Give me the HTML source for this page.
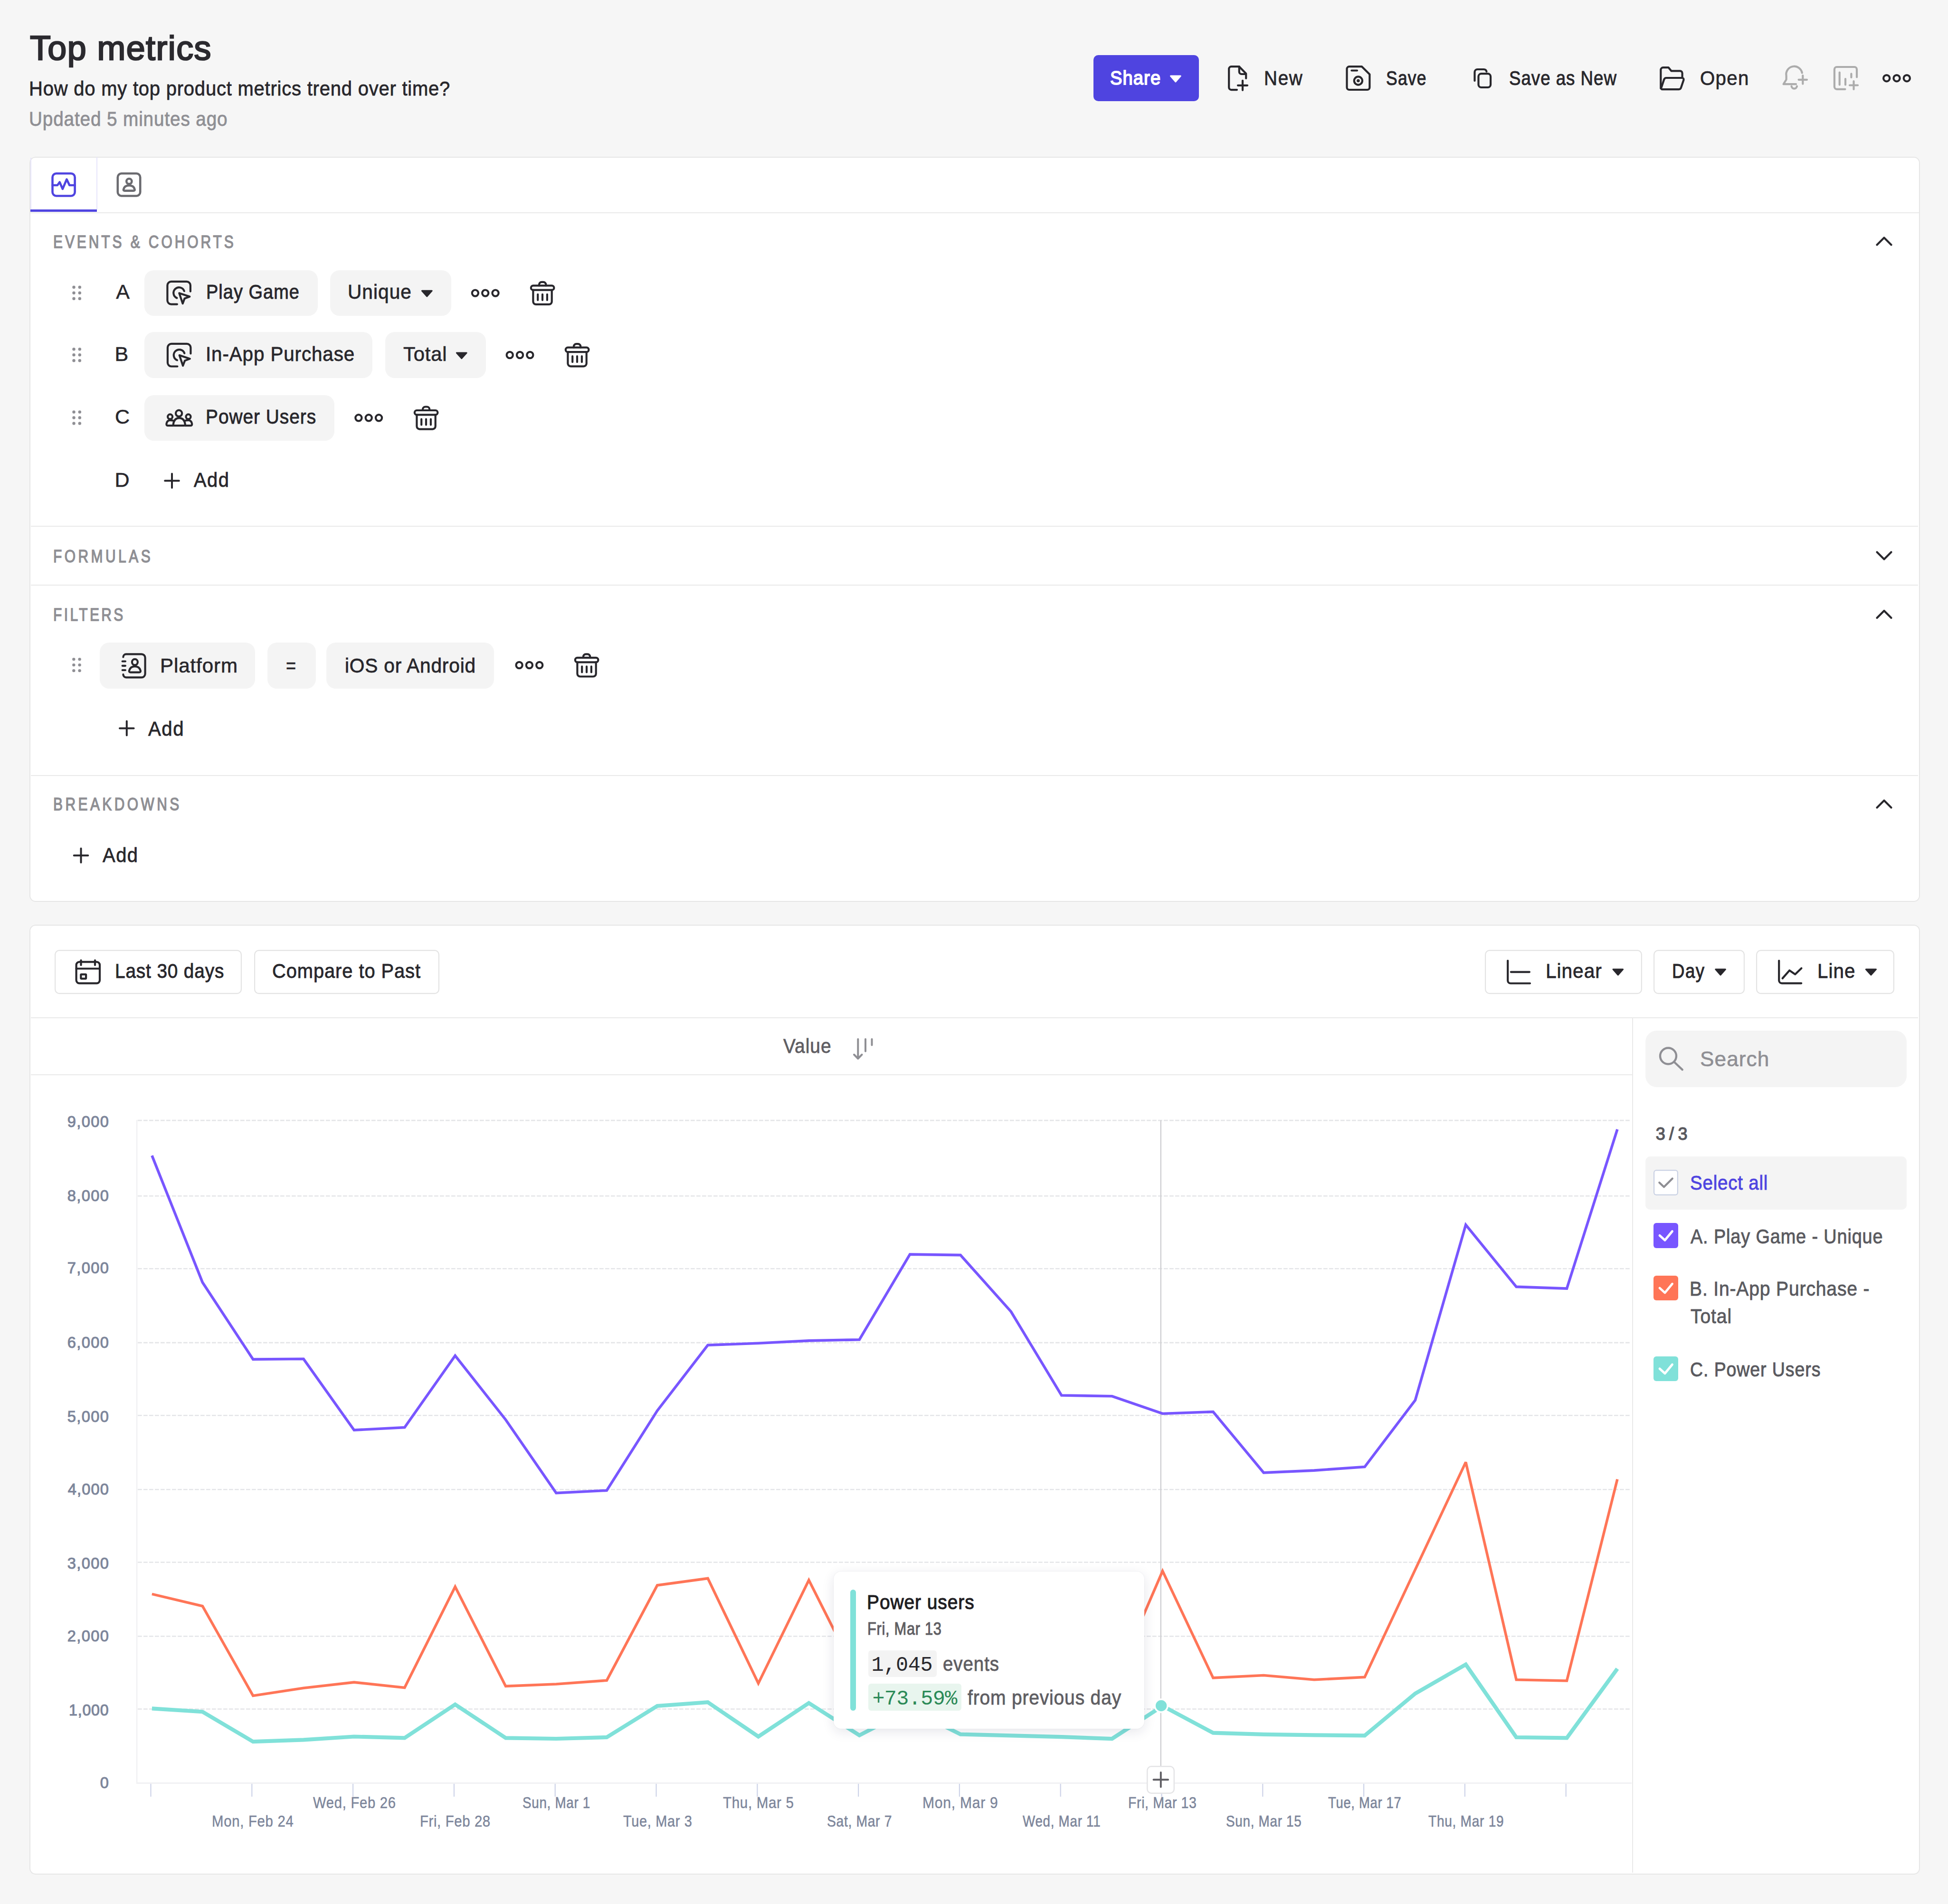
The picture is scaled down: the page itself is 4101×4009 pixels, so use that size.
<!DOCTYPE html>
<html><head><meta charset="utf-8"><title>Top metrics</title>
<style>
html,body{margin:0;padding:0;}
body{width:4101px;height:4009px;background:#f6f6f6;position:relative;overflow:hidden;font-family:"Liberation Sans",sans-serif;}
.b{position:absolute;box-sizing:border-box;}
.t{position:absolute;white-space:pre;}
svg.layer{position:absolute;left:0;top:0;width:4101px;height:4009px;}
</style></head><body>
<div class="b" style="left:61.6px;top:329.6px;width:3980.0px;height:1569.0px;background:#ffffff;box-shadow:inset 0 0 0 2px #e6e6e6;border-radius:13px;;z-index:1"></div><div class="b" style="left:61.6px;top:1946.6px;width:3980.0px;height:2000.4px;background:#ffffff;box-shadow:inset 0 0 0 2px #e6e6e6;border-radius:13px;;z-index:1"></div><div class="b" style="left:2301.6px;top:116.2px;width:222.4px;height:97.0px;background:#4f44e0;border-radius:10px;;z-index:2"></div><div class="b" style="left:63.6px;top:440.5px;width:140.3px;height:5.8px;background:#4f44e0;border-radius:0 0 0 0;;z-index:2"></div><div class="b" style="left:203.0px;top:331.0px;width:2.0px;height:110.0px;background:#e7e5fb;;z-index:2"></div><div class="b" style="left:63.6px;top:331.6px;width:2.0px;height:109.4px;background:#e7e5fb;;z-index:2"></div><div class="b" style="left:63.6px;top:446.8px;width:3976.0px;height:2.1px;background:#e9e9e9;;z-index:2"></div><div class="b" style="left:65.0px;top:1107.0px;width:3973.0px;height:2.2px;background:#e9e9e9;;z-index:2"></div><div class="b" style="left:65.0px;top:1230.5px;width:3973.0px;height:2.2px;background:#e9e9e9;;z-index:2"></div><div class="b" style="left:65.0px;top:1631.5px;width:3973.0px;height:2.2px;background:#e9e9e9;;z-index:2"></div><div class="b" style="left:304.4px;top:568.9px;width:365.0px;height:96.5px;background:#f4f4f4;border-radius:20px;;z-index:2"></div><div class="b" style="left:695.2px;top:568.9px;width:255.1px;height:96.5px;background:#f4f4f4;border-radius:20px;;z-index:2"></div><div class="b" style="left:304.4px;top:699.3px;width:480.0px;height:96.5px;background:#f4f4f4;border-radius:20px;;z-index:2"></div><div class="b" style="left:810.5px;top:699.3px;width:212.0px;height:96.5px;background:#f4f4f4;border-radius:20px;;z-index:2"></div><div class="b" style="left:304.4px;top:831.6px;width:399.8px;height:96.5px;background:#f4f4f4;border-radius:20px;;z-index:2"></div><div class="b" style="left:209.5px;top:1353.0px;width:327.0px;height:96.7px;background:#f4f4f4;border-radius:20px;;z-index:2"></div><div class="b" style="left:562.5px;top:1353.0px;width:102.1px;height:96.7px;background:#f4f4f4;border-radius:20px;;z-index:2"></div><div class="b" style="left:687.3px;top:1353.0px;width:352.4px;height:96.7px;background:#f4f4f4;border-radius:20px;;z-index:2"></div><div class="b" style="left:114.9px;top:2000.0px;width:394.0px;height:93.0px;background:#ffffff;box-shadow:inset 0 0 0 2.2px #e3e3e3;border-radius:10px;;z-index:2"></div><div class="b" style="left:535.4px;top:2000.0px;width:389.4px;height:93.0px;background:#ffffff;box-shadow:inset 0 0 0 2.2px #e3e3e3;border-radius:10px;;z-index:2"></div><div class="b" style="left:3125.7px;top:2000.0px;width:331.4px;height:93.0px;background:#ffffff;box-shadow:inset 0 0 0 2.2px #e3e3e3;border-radius:10px;;z-index:2"></div><div class="b" style="left:3481.3px;top:2000.0px;width:191.7px;height:93.0px;background:#ffffff;box-shadow:inset 0 0 0 2.2px #e3e3e3;border-radius:10px;;z-index:2"></div><div class="b" style="left:3697.1px;top:2000.0px;width:291.4px;height:93.0px;background:#ffffff;box-shadow:inset 0 0 0 2.2px #e3e3e3;border-radius:10px;;z-index:2"></div><div class="b" style="left:65.0px;top:2142.0px;width:3973.0px;height:2.2px;background:#e9e9e9;;z-index:2"></div><div class="b" style="left:3436.0px;top:2143.0px;width:2.2px;height:1800.0px;background:#e9e9e9;;z-index:2"></div><div class="b" style="left:65.0px;top:2262.0px;width:3372.0px;height:2.2px;background:#e9e9e9;;z-index:2"></div><div class="b" style="left:3463.6px;top:2170.1px;width:550.4px;height:119.3px;background:#f4f4f4;border-radius:24px;;z-index:2"></div><div class="b" style="left:3463.6px;top:2435.4px;width:550.4px;height:111.6px;background:#f4f4f4;border-radius:10px;;z-index:2"></div><div class="b" style="left:3480.8px;top:2463.0px;width:52.6px;height:53.8px;background:#ffffff;box-shadow:inset 0 0 0 2.2px #c9d1e3;border-radius:6px;;z-index:3"></div><div class="b" style="left:3480.8px;top:2575.0px;width:52.6px;height:52.8px;background:#7856ff;border-radius:6px;;z-index:3"></div><div class="b" style="left:3480.8px;top:2685.6px;width:52.6px;height:52.8px;background:#ff7557;border-radius:6px;;z-index:3"></div><div class="b" style="left:3480.8px;top:2855.5px;width:52.6px;height:52.8px;background:#80e1d9;border-radius:6px;;z-index:3"></div>
<svg class="layer" style="z-index:8" width="4101" height="4009" viewBox="0 0 4101 4009">
<path d="M2464.5 160.1 H2485.3 L2474.9 172.0 Z" fill="#ffffff" stroke="#ffffff" stroke-width="3" stroke-linejoin="round"/>
<g fill="none" stroke="#28272c" stroke-width="4.2" stroke-linecap="round" stroke-linejoin="round"><path d="M2604 189.1 H2592.2 A5 5 0 0 1 2587.2 184.1 V145.2 A5 5 0 0 1 2592.2 140.2 H2608.8 L2623.2 155 V165"/><path d="M2608.8 140.2 V151 A5 5 0 0 0 2613.8 156 H2623"/><path d="M2606 179.8 H2626 M2616 169.8 V189.8"/></g>
<g fill="none" stroke="#28272c" stroke-width="4.2" stroke-linecap="round" stroke-linejoin="round"><path d="M2840.5 140.2 H2867 L2883.4 156.6 V184 A5 5 0 0 1 2878.4 189 H2840.5 A5 5 0 0 1 2835.5 184 V145.2 A5 5 0 0 1 2840.5 140.2 Z"/><path d="M2845.5 148.5 H2857"/><circle cx="2859.4" cy="170" r="8.6"/><circle cx="2859.4" cy="170" r="1.2" fill="#28272c"/></g>
<g fill="none" stroke="#28272c" stroke-width="4.2" stroke-linecap="round" stroke-linejoin="round"><path d="M3104.5 170 V152 A6 6 0 0 1 3110.5 146 H3123.5 A6 6 0 0 1 3129.5 150.5"/><rect x="3112.5" y="155.2" width="25.6" height="28.8" rx="6"/></g>
<g fill="none" stroke="#28272c" stroke-width="4.2" stroke-linecap="round" stroke-linejoin="round"><path d="M3496.3 186 V147.2 A5 5 0 0 1 3501.3 142.2 H3512.5 L3518.5 149.3 H3537 A4.6 4.6 0 0 1 3541.6 153.9 V162"/><path d="M3496.8 186.5 L3503.2 167.5 A5 5 0 0 1 3508 164 H3541.2 A3.4 3.4 0 0 1 3544.5 168.3 L3539 184.5 A5 5 0 0 1 3534.3 188.2 H3500 A3.5 3.5 0 0 1 3496.8 186.5 Z"/></g>
<g fill="none" stroke="#acacac" stroke-width="4.2" stroke-linecap="round" stroke-linejoin="round"><path d="M3793.8 153.5 A16.5 16.5 0 0 0 3760.6 159.6 V167.5 L3754.6 177.2 H3781"/><path d="M3771.5 181.5 A5.8 5.8 0 0 0 3783 181.5"/><path d="M3786.6 167.8 H3804 M3795.3 159 V176.6"/></g>
<g fill="none" stroke="#acacac" stroke-width="4.2" stroke-linecap="round" stroke-linejoin="round"><path d="M3884.5 187.8 H3866.9 A5 5 0 0 1 3861.9 182.8 V146 A5 5 0 0 1 3866.9 141 H3904 A5 5 0 0 1 3909 146 V162.5"/><path d="M3872.7 152.5 V178.5 M3885 166.2 V178.5 M3897.4 155.4 V163"/><path d="M3894 179.5 H3911 M3902.5 171 V188"/></g>
<circle cx="3971.7" cy="164.7" r="6.6" fill="none" stroke="#28272c" stroke-width="4.2"/><circle cx="3993.0" cy="164.7" r="6.6" fill="none" stroke="#28272c" stroke-width="4.2"/><circle cx="4014.3" cy="164.7" r="6.6" fill="none" stroke="#28272c" stroke-width="4.2"/>
<g fill="none" stroke="#4f44e0" stroke-width="4.6" stroke-linecap="round" stroke-linejoin="round"><rect x="110.5" y="365.3" width="47.1" height="47.2" rx="8"/><path d="M110.5 390 H120.9 L125.6 383.5 L131.8 397.8 L140.4 377.6 L146.3 390 H157.6"/></g>
<g fill="none" stroke="#6b6b70" stroke-width="4.6" stroke-linecap="round" stroke-linejoin="round"><rect x="247.8" y="365.3" width="47.4" height="47.2" rx="8"/><circle cx="271.8" cy="381.8" r="5.6"/><path d="M260 399 Q261.5 390.5 271.8 390.5 Q282 390.5 283.6 399 Q284 401.6 281 401.6 H262.5 Q259.6 401.6 260 399 Z"/></g>
<path d="M3951.5 515.5 L3966.5 500.5 L3981.5 515.5" fill="none" stroke="#28272c" stroke-width="4.2" stroke-linecap="round" stroke-linejoin="round"/>
<path d="M3951.5 1162.5 L3966.5 1177.5 L3981.5 1162.5" fill="none" stroke="#28272c" stroke-width="4.2" stroke-linecap="round" stroke-linejoin="round"/>
<path d="M3951.5 1301.0 L3966.5 1286.0 L3981.5 1301.0" fill="none" stroke="#28272c" stroke-width="4.2" stroke-linecap="round" stroke-linejoin="round"/>
<path d="M3951.5 1700.5 L3966.5 1685.5 L3981.5 1700.5" fill="none" stroke="#28272c" stroke-width="4.2" stroke-linecap="round" stroke-linejoin="round"/>
<circle cx="155.5" cy="604.8" r="3.2" fill="#8f8f94"/>
<circle cx="155.5" cy="616.8" r="3.2" fill="#8f8f94"/>
<circle cx="155.5" cy="628.8" r="3.2" fill="#8f8f94"/>
<circle cx="167.8" cy="604.8" r="3.2" fill="#8f8f94"/>
<circle cx="167.8" cy="616.8" r="3.2" fill="#8f8f94"/>
<circle cx="167.8" cy="628.8" r="3.2" fill="#8f8f94"/>
<circle cx="155.5" cy="735.2" r="3.2" fill="#8f8f94"/>
<circle cx="155.5" cy="747.2" r="3.2" fill="#8f8f94"/>
<circle cx="155.5" cy="759.2" r="3.2" fill="#8f8f94"/>
<circle cx="167.8" cy="735.2" r="3.2" fill="#8f8f94"/>
<circle cx="167.8" cy="747.2" r="3.2" fill="#8f8f94"/>
<circle cx="167.8" cy="759.2" r="3.2" fill="#8f8f94"/>
<circle cx="155.5" cy="867.5" r="3.2" fill="#8f8f94"/>
<circle cx="155.5" cy="879.5" r="3.2" fill="#8f8f94"/>
<circle cx="155.5" cy="891.5" r="3.2" fill="#8f8f94"/>
<circle cx="167.8" cy="867.5" r="3.2" fill="#8f8f94"/>
<circle cx="167.8" cy="879.5" r="3.2" fill="#8f8f94"/>
<circle cx="167.8" cy="891.5" r="3.2" fill="#8f8f94"/>
<g transform="translate(340,579.9)" fill="none" stroke="#28272c" stroke-width="4.2" stroke-linecap="round" stroke-linejoin="round" stroke-width="4"><path d="M60.9 33.7 V21 A8 8 0 0 0 52.9 13 H20.4 A8 8 0 0 0 12.4 21 V52.7 A8 8 0 0 0 20.4 60.7 H32.9"/><path d="M47.8 33 A11.6 11.6 0 1 0 32.4 47.6"/><path d="M37.3 37.3 L59.3 44.6 L48.6 48.6 L44.6 59.3 Z"/></g>
<path d="M888.4 612.3 H909.1999999999999 L898.8 624.0 Z" fill="#28272c" stroke="#28272c" stroke-width="3" stroke-linejoin="round"/>
<circle cx="1000.4" cy="617.1" r="6.6" fill="none" stroke="#28272c" stroke-width="4.2"/><circle cx="1021.7" cy="617.1" r="6.6" fill="none" stroke="#28272c" stroke-width="4.2"/><circle cx="1043.0" cy="617.1" r="6.6" fill="none" stroke="#28272c" stroke-width="4.2"/>
<g transform="translate(1105,580.4)" fill="none" stroke="#28272c" stroke-width="4.2" stroke-linecap="round" stroke-linejoin="round" stroke-width="4"><rect x="12.8" y="20.9" width="48.6" height="9.4" rx="4.7"/><path d="M29.9 20.9 V19 A5.5 5.5 0 0 1 35.4 13.4 H38.8 A5.5 5.5 0 0 1 44.3 19 V20.9"/><path d="M17.4 30.3 V54.5 A6 6 0 0 0 23.4 60.5 H50.7 A6 6 0 0 0 56.7 54.5 V30.3"/><path d="M27.2 39.4 V51.4 M37 39.4 V51.4 M46.9 39.4 V51.4"/></g>
<g transform="translate(340.5,710.8)" fill="none" stroke="#28272c" stroke-width="4.2" stroke-linecap="round" stroke-linejoin="round" stroke-width="4"><path d="M60.9 33.7 V21 A8 8 0 0 0 52.9 13 H20.4 A8 8 0 0 0 12.4 21 V52.7 A8 8 0 0 0 20.4 60.7 H32.9"/><path d="M47.8 33 A11.6 11.6 0 1 0 32.4 47.6"/><path d="M37.3 37.3 L59.3 44.6 L48.6 48.6 L44.6 59.3 Z"/></g>
<path d="M961.4 742.9 H982.1999999999999 L971.8 754.6 Z" fill="#28272c" stroke="#28272c" stroke-width="3" stroke-linejoin="round"/>
<circle cx="1073.2" cy="747.5" r="6.6" fill="none" stroke="#28272c" stroke-width="4.2"/><circle cx="1094.5" cy="747.5" r="6.6" fill="none" stroke="#28272c" stroke-width="4.2"/><circle cx="1115.8" cy="747.5" r="6.6" fill="none" stroke="#28272c" stroke-width="4.2"/>
<g transform="translate(1178,710.8)" fill="none" stroke="#28272c" stroke-width="4.2" stroke-linecap="round" stroke-linejoin="round" stroke-width="4"><rect x="12.8" y="20.9" width="48.6" height="9.4" rx="4.7"/><path d="M29.9 20.9 V19 A5.5 5.5 0 0 1 35.4 13.4 H38.8 A5.5 5.5 0 0 1 44.3 19 V20.9"/><path d="M17.4 30.3 V54.5 A6 6 0 0 0 23.4 60.5 H50.7 A6 6 0 0 0 56.7 54.5 V30.3"/><path d="M27.2 39.4 V51.4 M37 39.4 V51.4 M46.9 39.4 V51.4"/></g>
<g transform="translate(340,845)" fill="none" stroke="#28272c" stroke-width="4.2" stroke-linecap="round" stroke-linejoin="round" stroke-width="4"><circle cx="36.6" cy="25.3" r="6.6"/><circle cx="18.1" cy="32.4" r="5"/><circle cx="56.5" cy="32.4" r="5"/><path d="M24.8 48.5 Q26.5 35.2 37.3 35.2 Q48 35.2 49.8 48.5 Q50.2 51.2 47 51.2 H27.5 Q24.5 51.2 24.8 48.5 Z"/><path d="M24 40.6 Q21.5 39.9 18.3 39.9 Q11.5 39.9 10.4 47.6 Q10.2 51.2 13.5 51.2 H25"/><path d="M50.6 40.6 Q53.1 39.9 56.3 39.9 Q63.1 39.9 64.2 47.6 Q64.4 51.2 61.1 51.2 H49.6"/></g>
<circle cx="754.9" cy="879.8" r="6.6" fill="none" stroke="#28272c" stroke-width="4.2"/><circle cx="776.2" cy="879.8" r="6.6" fill="none" stroke="#28272c" stroke-width="4.2"/><circle cx="797.5" cy="879.8" r="6.6" fill="none" stroke="#28272c" stroke-width="4.2"/>
<g transform="translate(860,843.1)" fill="none" stroke="#28272c" stroke-width="4.2" stroke-linecap="round" stroke-linejoin="round" stroke-width="4"><rect x="12.8" y="20.9" width="48.6" height="9.4" rx="4.7"/><path d="M29.9 20.9 V19 A5.5 5.5 0 0 1 35.4 13.4 H38.8 A5.5 5.5 0 0 1 44.3 19 V20.9"/><path d="M17.4 30.3 V54.5 A6 6 0 0 0 23.4 60.5 H50.7 A6 6 0 0 0 56.7 54.5 V30.3"/><path d="M27.2 39.4 V51.4 M37 39.4 V51.4 M46.9 39.4 V51.4"/></g>
<path d="M347.2 1012.2 H376.8 M362 997.4000000000001 V1027.0" fill="none" stroke="#28272c" stroke-width="4.0" stroke-linecap="round"/>
<circle cx="155.3" cy="1388.1" r="3.2" fill="#8f8f94"/>
<circle cx="155.3" cy="1400.1" r="3.2" fill="#8f8f94"/>
<circle cx="155.3" cy="1412.1" r="3.2" fill="#8f8f94"/>
<circle cx="167.6" cy="1388.1" r="3.2" fill="#8f8f94"/>
<circle cx="167.6" cy="1400.1" r="3.2" fill="#8f8f94"/>
<circle cx="167.6" cy="1412.1" r="3.2" fill="#8f8f94"/>
<g transform="translate(245,1370)" fill="none" stroke="#28272c" stroke-width="4.2" stroke-linecap="round" stroke-linejoin="round" stroke-width="4"><path d="M14.4 13.5 A6.2 6.2 0 0 1 20.6 7.3 H53 A7.6 7.6 0 0 1 60.6 14.9 V48.8 A7.6 7.6 0 0 1 53 56.4 H20.6 A6.2 6.2 0 0 1 14.4 50.2"/><path d="M12.7 22.5 H18.9 M12.7 31.8 H18.9 M12.7 41 H18.9"/><ellipse cx="38.9" cy="24.1" rx="6" ry="6.3"/><path d="M27 42 Q29.5 33.2 38.9 33.2 Q48.3 33.2 50.8 42 Q51.6 45.7 47.8 45.7 H30 Q26.2 45.7 27 42 Z"/></g>
<circle cx="1093.1" cy="1400.5" r="6.6" fill="none" stroke="#28272c" stroke-width="4.2"/><circle cx="1114.4" cy="1400.5" r="6.6" fill="none" stroke="#28272c" stroke-width="4.2"/><circle cx="1135.7" cy="1400.5" r="6.6" fill="none" stroke="#28272c" stroke-width="4.2"/>
<g transform="translate(1198,1364)" fill="none" stroke="#28272c" stroke-width="4.2" stroke-linecap="round" stroke-linejoin="round" stroke-width="4"><rect x="12.8" y="20.9" width="48.6" height="9.4" rx="4.7"/><path d="M29.9 20.9 V19 A5.5 5.5 0 0 1 35.4 13.4 H38.8 A5.5 5.5 0 0 1 44.3 19 V20.9"/><path d="M17.4 30.3 V54.5 A6 6 0 0 0 23.4 60.5 H50.7 A6 6 0 0 0 56.7 54.5 V30.3"/><path d="M27.2 39.4 V51.4 M37 39.4 V51.4 M46.9 39.4 V51.4"/></g>
<path d="M252.0 1533.4 H281.6 M266.8 1518.6000000000001 V1548.2" fill="none" stroke="#28272c" stroke-width="4.0" stroke-linecap="round"/>
<path d="M155.7 1801.3 H185.3 M170.5 1786.5 V1816.1" fill="none" stroke="#28272c" stroke-width="4.0" stroke-linecap="round"/>
<g fill="none" stroke="#28272c" stroke-width="4.2" stroke-linecap="round" stroke-linejoin="round" stroke-width="4.2"><rect x="160.6" y="2025.4" width="49.4" height="44.9" rx="6.5"/><path d="M160.6 2039.5 H210 M170.5 2022 V2032 M200 2022 V2032"/><rect x="170.3" y="2051.6" width="10.8" height="9" rx="1"/></g>
<g fill="none" stroke="#28272c" stroke-width="4.2" stroke-linecap="round" stroke-linejoin="round" stroke-width="4.2"><path d="M3174.2 2022.8 V2064.5 A6 6 0 0 0 3180.2 2070.5 H3221 M3180.9 2046.6 H3219.9"/></g>
<path d="M3396 2041.0 H3416.6 L3406.3 2052.7 Z" fill="#28272c" stroke="#28272c" stroke-width="3" stroke-linejoin="round"/>
<path d="M3611.8 2041.0 H3632.4 L3622.1000000000004 2052.7 Z" fill="#28272c" stroke="#28272c" stroke-width="3" stroke-linejoin="round"/>
<g fill="none" stroke="#28272c" stroke-width="4.2" stroke-linecap="round" stroke-linejoin="round" stroke-width="4.2"><path d="M3745.2 2022.8 V2064.3 A6 6 0 0 0 3751.2 2070.3 H3792.2"/><path d="M3752.6 2060 L3767.2 2043.3 L3779.2 2051.4 L3792.4 2038.8"/></g>
<path d="M3928.3 2041.0 H3949.5 L3938.9 2052.7 Z" fill="#28272c" stroke="#28272c" stroke-width="3" stroke-linejoin="round"/>
<g fill="none" stroke="#8f8f94" stroke-width="4" stroke-linecap="round" stroke-linejoin="round"><path d="M1806.3 2188 V2228.5 M1798 2220.5 L1806.3 2229 L1814.5 2220.5 M1822 2188 V2213.5 M1835.5 2188 V2200.5"/></g>
<g fill="none" stroke="#8f8f94" stroke-width="4.4" stroke-linecap="round"><circle cx="3512" cy="2223.5" r="17"/><path d="M3524.5 2236 L3541.8 2252.3"/></g>
<path d="M3493.3 2490 L3503 2499.3 L3520.8 2481.5" fill="none" stroke="#8e8e93" stroke-width="4.2" stroke-linecap="round" stroke-linejoin="round"/>
<path d="M3494 2601.4 L3505 2611.4 L3520.5 2592.6" fill="none" stroke="#ffffff" stroke-width="4.8" stroke-linecap="round" stroke-linejoin="round"/>
<path d="M3494 2712.0 L3505 2722.0 L3520.5 2703.2" fill="none" stroke="#ffffff" stroke-width="4.8" stroke-linecap="round" stroke-linejoin="round"/>
<path d="M3494 2881.9 L3505 2891.9 L3520.5 2873.1" fill="none" stroke="#ffffff" stroke-width="4.8" stroke-linecap="round" stroke-linejoin="round"/>
<line x1="290" y1="3598.5" x2="3433" y2="3598.5" stroke="#e4e5e8" stroke-width="2.6" stroke-dasharray="8.7 3.3"/>
<line x1="290" y1="3445.2" x2="3433" y2="3445.2" stroke="#e4e5e8" stroke-width="2.6" stroke-dasharray="8.7 3.3"/>
<line x1="290" y1="3289.5" x2="3433" y2="3289.5" stroke="#e4e5e8" stroke-width="2.6" stroke-dasharray="8.7 3.3"/>
<line x1="290" y1="3136.2" x2="3433" y2="3136.2" stroke="#e4e5e8" stroke-width="2.6" stroke-dasharray="8.7 3.3"/>
<line x1="290" y1="2980.3" x2="3433" y2="2980.3" stroke="#e4e5e8" stroke-width="2.6" stroke-dasharray="8.7 3.3"/>
<line x1="290" y1="2827.1" x2="3433" y2="2827.1" stroke="#e4e5e8" stroke-width="2.6" stroke-dasharray="8.7 3.3"/>
<line x1="290" y1="2671.2" x2="3433" y2="2671.2" stroke="#e4e5e8" stroke-width="2.6" stroke-dasharray="8.7 3.3"/>
<line x1="290" y1="2518.2" x2="3433" y2="2518.2" stroke="#e4e5e8" stroke-width="2.6" stroke-dasharray="8.7 3.3"/>
<line x1="290" y1="2359.1" x2="3433" y2="2359.1" stroke="#e4e5e8" stroke-width="2.6" stroke-dasharray="8.7 3.3"/>
<line x1="288.2" y1="2358" x2="288.2" y2="3753.5" stroke="#efeff1" stroke-width="2.2"/>
<line x1="287" y1="3754.5" x2="3435" y2="3754.5" stroke="#f1f1f3" stroke-width="3"/>
<line x1="317.5" y1="3756" x2="317.5" y2="3783" stroke="#cdd3e8" stroke-width="2.2"/>
<line x1="530.3" y1="3756" x2="530.3" y2="3783" stroke="#cdd3e8" stroke-width="2.2"/>
<line x1="743.1" y1="3756" x2="743.1" y2="3783" stroke="#cdd3e8" stroke-width="2.2"/>
<line x1="955.9" y1="3756" x2="955.9" y2="3783" stroke="#cdd3e8" stroke-width="2.2"/>
<line x1="1168.7" y1="3756" x2="1168.7" y2="3783" stroke="#cdd3e8" stroke-width="2.2"/>
<line x1="1381.5" y1="3756" x2="1381.5" y2="3783" stroke="#cdd3e8" stroke-width="2.2"/>
<line x1="1594.3" y1="3756" x2="1594.3" y2="3783" stroke="#cdd3e8" stroke-width="2.2"/>
<line x1="1807.1" y1="3756" x2="1807.1" y2="3783" stroke="#cdd3e8" stroke-width="2.2"/>
<line x1="2019.9" y1="3756" x2="2019.9" y2="3783" stroke="#cdd3e8" stroke-width="2.2"/>
<line x1="2232.7" y1="3756" x2="2232.7" y2="3783" stroke="#cdd3e8" stroke-width="2.2"/>
<line x1="2445.5" y1="3756" x2="2445.5" y2="3783" stroke="#cdd3e8" stroke-width="2.2"/>
<line x1="2658.3" y1="3756" x2="2658.3" y2="3783" stroke="#cdd3e8" stroke-width="2.2"/>
<line x1="2871.1" y1="3756" x2="2871.1" y2="3783" stroke="#cdd3e8" stroke-width="2.2"/>
<line x1="3083.9" y1="3756" x2="3083.9" y2="3783" stroke="#cdd3e8" stroke-width="2.2"/>
<line x1="3296.7" y1="3756" x2="3296.7" y2="3783" stroke="#cdd3e8" stroke-width="2.2"/>
<line x1="2443.8" y1="2359" x2="2443.8" y2="3720" stroke="#cfcfd2" stroke-width="2.4"/>
<polyline points="319.9,2433.1 426.3,2700.1 532.7,2862.1 639.0,2861.3 745.4,3011.1 851.8,3005.6 958.2,2854.5 1064.6,2989.3 1170.9,3143.6 1277.3,3138.3 1383.7,2970.3 1490.1,2832.2 1596.5,2828.3 1702.8,2822.9 1809.2,2820.7 1915.6,2641.1 2022.0,2642.6 2128.4,2761.7 2234.7,2938.0 2341.1,2939.8 2447.5,2976.5 2553.9,2972.6 2660.3,3100.8 2766.6,3096.1 2873.0,3088.6 2979.4,2948.1 3085.8,2578.9 3192.2,2709.4 3298.5,2713.1 3404.9,2377.9" fill="none" stroke="#7856ff" stroke-width="5.6" stroke-linejoin="miter" stroke-miterlimit="3"/>
<polyline points="319.9,3356.4 426.3,3381.7 532.7,3570.4 639.0,3554.3 745.4,3542.1 851.8,3553.6 958.2,3340.9 1064.6,3550.4 1170.9,3546.0 1277.3,3538.2 1383.7,3337.9 1490.1,3323.4 1596.5,3544.4 1702.8,3327.1 1809.2,3538.1 1915.6,3521.0 2022.0,3528.8 2128.4,3544.2 2234.7,3552.0 2341.1,3554.6 2447.5,3307.9 2553.9,3532.9 2660.3,3527.5 2766.6,3536.7 2873.0,3531.4 2979.4,3304.9 3085.8,3078.6 3192.2,3536.7 3298.5,3539.0 3404.9,3114.6" fill="none" stroke="#ff7557" stroke-width="5.6" stroke-linejoin="miter" stroke-miterlimit="3"/>
<polyline points="319.9,3597.4 426.3,3604.2 532.7,3667.2 639.0,3663.3 745.4,3656.5 851.8,3659.4 958.2,3588.9 1064.6,3659.4 1170.9,3661.0 1277.3,3658.0 1383.7,3592.0 1490.1,3584.2 1596.5,3656.5 1702.8,3585.8 1809.2,3653.8 1915.6,3598.5 2022.0,3651.7 2128.4,3654.3 2234.7,3657.2 2341.1,3661.0 2447.5,3592.0 2553.9,3648.7 2660.3,3651.8 2766.6,3653.4 2873.0,3654.3 2979.4,3565.9 3085.8,3504.6 3192.2,3658.0 3298.5,3659.4 3404.9,3513.7" fill="none" stroke="#80e1d9" stroke-width="8.2" stroke-linejoin="miter" stroke-miterlimit="3"/>
<circle cx="2444.6" cy="3591.5" r="13.5" fill="#80e1d9" stroke="#ffffff" stroke-width="3.6"/>
</svg>
<div class="b" style="left:2414.4px;top:3717.7px;width:58.9px;height:59.0px;background:#ffffff;box-shadow:inset 0 0 0 2.5px #e4e4e6;border-radius:10px;;z-index:12"></div><div class="b" style="left:1754.6px;top:3308.7px;width:654.6px;height:331.1px;background:#ffffff;border-radius:16px;box-shadow:0 6px 26px rgba(30,30,70,0.11), 0 0 0 1px rgba(20,20,50,0.03);;z-index:20"></div><div class="b" style="left:1789.5px;top:3347.0px;width:12.3px;height:254.6px;background:#80e1d9;border-radius:6px;;z-index:21"></div><div class="b" style="left:1828.0px;top:3474.7px;width:143.9px;height:56.6px;background:#f3f3f3;border-radius:6px;;z-index:21"></div><div class="b" style="left:1828.0px;top:3544.9px;width:196.4px;height:56.7px;background:#e8f5ee;border-radius:6px;;z-index:21"></div>
<svg class="layer" style="z-index:13" width="4101" height="4009" viewBox="0 0 4101 4009">
<path d="M2428.5 3747.2 H2459.1 M2443.8 3731.9 V3762.5" fill="none" stroke="#5f5e63" stroke-width="3.9" stroke-linecap="round"/>
</svg>
<div class="t" style="left:62.7px;top:64.0px;font-size:73px;line-height:73px;font-weight:400;color:#2b2a2f;letter-spacing:1.51px;font-family:'Liberation Sans', sans-serif;z-index:5;-webkit-text-stroke:2.65px #2b2a2f;transform:scaleX(0.982);transform-origin:0 0">Top metrics</div>
<div class="t" style="left:60.8px;top:166.0px;font-size:42.5px;line-height:42.5px;font-weight:400;color:#28272c;letter-spacing:0.85px;font-family:'Liberation Sans', sans-serif;z-index:5;-webkit-text-stroke:0.77px #28272c;transform:scaleX(0.940);transform-origin:0 0">How do my top product metrics trend over time?</div>
<div class="t" style="left:60.8px;top:230.0px;font-size:42px;line-height:42px;font-weight:400;color:#8f8f94;letter-spacing:0.93px;font-family:'Liberation Sans', sans-serif;z-index:5;-webkit-text-stroke:0.82px #8f8f94;transform:scaleX(0.922);transform-origin:0 0">Updated 5 minutes ago</div>
<div class="t" style="left:2336.6px;top:143.3px;font-size:41.5px;line-height:41.5px;font-weight:400;color:#ffffff;letter-spacing:1.18px;font-family:'Liberation Sans', sans-serif;z-index:6;-webkit-text-stroke:1.83px #ffffff;transform:scaleX(0.919);transform-origin:0 0">Share</div>
<div class="t" style="left:2661.0px;top:144.0px;font-size:42px;line-height:42px;font-weight:400;color:#28272c;letter-spacing:1.77px;font-family:'Liberation Sans', sans-serif;z-index:5;-webkit-text-stroke:0.82px #28272c;transform:scaleX(0.923);transform-origin:0 0">New</div>
<div class="t" style="left:2918.3px;top:144.2px;font-size:42px;line-height:42px;font-weight:400;color:#28272c;letter-spacing:1.48px;font-family:'Liberation Sans', sans-serif;z-index:5;-webkit-text-stroke:1.05px #28272c;transform:scaleX(0.844);transform-origin:0 0">Save</div>
<div class="t" style="left:3177.2px;top:144.2px;font-size:42px;line-height:42px;font-weight:400;color:#28272c;letter-spacing:1.13px;font-family:'Liberation Sans', sans-serif;z-index:5;-webkit-text-stroke:0.96px #28272c;transform:scaleX(0.873);transform-origin:0 0">Save as New</div>
<div class="t" style="left:3579.1px;top:144.2px;font-size:42px;line-height:42px;font-weight:400;color:#28272c;letter-spacing:1.38px;font-family:'Liberation Sans', sans-serif;z-index:5;-webkit-text-stroke:0.72px #28272c;transform:scaleX(0.958);transform-origin:0 0">Open</div>
<div class="t" style="left:112.0px;top:492.2px;font-size:36.5px;line-height:36.5px;font-weight:400;color:#8f8f94;letter-spacing:6.03px;font-family:'Liberation Sans', sans-serif;z-index:5;-webkit-text-stroke:1.50px #8f8f94;transform:scaleX(0.820);transform-origin:0 0">EVENTS &amp; COHORTS</div>
<div class="t" style="left:112.0px;top:1154.0px;font-size:36.5px;line-height:36.5px;font-weight:400;color:#8f8f94;letter-spacing:6.68px;font-family:'Liberation Sans', sans-serif;z-index:5;-webkit-text-stroke:1.50px #8f8f94;transform:scaleX(0.820);transform-origin:0 0">FORMULAS</div>
<div class="t" style="left:112.0px;top:1277.0px;font-size:36.5px;line-height:36.5px;font-weight:400;color:#8f8f94;letter-spacing:5.37px;font-family:'Liberation Sans', sans-serif;z-index:5;-webkit-text-stroke:1.50px #8f8f94;transform:scaleX(0.820);transform-origin:0 0">FILTERS</div>
<div class="t" style="left:112.0px;top:1676.4px;font-size:36.5px;line-height:36.5px;font-weight:400;color:#8f8f94;letter-spacing:6.64px;font-family:'Liberation Sans', sans-serif;z-index:5;-webkit-text-stroke:1.50px #8f8f94;transform:scaleX(0.820);transform-origin:0 0">BREAKDOWNS</div>
<div class="t" style="left:244.2px;top:592.8px;font-size:43px;line-height:43px;font-weight:400;color:#28272c;letter-spacing:0.00px;font-family:'Liberation Sans', sans-serif;z-index:5;-webkit-text-stroke:0.60px #28272c">A</div>
<div class="t" style="left:241.6px;top:724.0px;font-size:43px;line-height:43px;font-weight:400;color:#28272c;letter-spacing:0.00px;font-family:'Liberation Sans', sans-serif;z-index:5;-webkit-text-stroke:0.60px #28272c">B</div>
<div class="t" style="left:242.0px;top:856.0px;font-size:43px;line-height:43px;font-weight:400;color:#28272c;letter-spacing:0.00px;font-family:'Liberation Sans', sans-serif;z-index:5;-webkit-text-stroke:0.60px #28272c">C</div>
<div class="t" style="left:241.6px;top:988.5px;font-size:43px;line-height:43px;font-weight:400;color:#28272c;letter-spacing:0.00px;font-family:'Liberation Sans', sans-serif;z-index:5;-webkit-text-stroke:0.60px #28272c">D</div>
<div class="t" style="left:434.1px;top:592.9px;font-size:43.2px;line-height:43.2px;font-weight:400;color:#28272c;letter-spacing:1.19px;font-family:'Liberation Sans', sans-serif;z-index:5;-webkit-text-stroke:0.95px #28272c;transform:scaleX(0.878);transform-origin:0 0">Play Game</div>
<div class="t" style="left:732.0px;top:592.9px;font-size:43.2px;line-height:43.2px;font-weight:400;color:#28272c;letter-spacing:1.13px;font-family:'Liberation Sans', sans-serif;z-index:5;-webkit-text-stroke:0.78px #28272c;transform:scaleX(0.939);transform-origin:0 0">Unique</div>
<div class="t" style="left:432.8px;top:723.5px;font-size:43.2px;line-height:43.2px;font-weight:400;color:#28272c;letter-spacing:0.97px;font-family:'Liberation Sans', sans-serif;z-index:5;-webkit-text-stroke:0.79px #28272c;transform:scaleX(0.934);transform-origin:0 0">In-App Purchase</div>
<div class="t" style="left:849.3px;top:723.5px;font-size:43.2px;line-height:43.2px;font-weight:400;color:#28272c;letter-spacing:0.92px;font-family:'Liberation Sans', sans-serif;z-index:5;-webkit-text-stroke:0.70px #28272c;transform:scaleX(0.965);transform-origin:0 0">Total</div>
<div class="t" style="left:432.9px;top:855.8px;font-size:43.2px;line-height:43.2px;font-weight:400;color:#28272c;letter-spacing:1.08px;font-family:'Liberation Sans', sans-serif;z-index:5;-webkit-text-stroke:0.88px #28272c;transform:scaleX(0.900);transform-origin:0 0">Power Users</div>
<div class="t" style="left:407.5px;top:988.5px;font-size:43.2px;line-height:43.2px;font-weight:400;color:#28272c;letter-spacing:1.62px;font-family:'Liberation Sans', sans-serif;z-index:5;-webkit-text-stroke:0.82px #28272c;transform:scaleX(0.922);transform-origin:0 0">Add</div>
<div class="t" style="left:336.7px;top:1380.0px;font-size:43.2px;line-height:43.2px;font-weight:400;color:#28272c;letter-spacing:0.91px;font-family:'Liberation Sans', sans-serif;z-index:5;-webkit-text-stroke:0.67px #28272c;transform:scaleX(0.975);transform-origin:0 0">Platform</div>
<div class="t" style="left:602.3px;top:1380.0px;font-size:43.2px;line-height:43.2px;font-weight:400;color:#28272c;letter-spacing:0.00px;font-family:'Liberation Sans', sans-serif;z-index:5;-webkit-text-stroke:0.60px #28272c;transform:scaleX(0.840);transform-origin:0 0">=</div>
<div class="t" style="left:725.5px;top:1380.0px;font-size:43.2px;line-height:43.2px;font-weight:400;color:#28272c;letter-spacing:0.91px;font-family:'Liberation Sans', sans-serif;z-index:5;-webkit-text-stroke:0.77px #28272c;transform:scaleX(0.940);transform-origin:0 0">iOS or Android</div>
<div class="t" style="left:311.6px;top:1513.0px;font-size:43.2px;line-height:43.2px;font-weight:400;color:#28272c;letter-spacing:1.61px;font-family:'Liberation Sans', sans-serif;z-index:5;-webkit-text-stroke:0.80px #28272c;transform:scaleX(0.932);transform-origin:0 0">Add</div>
<div class="t" style="left:215.8px;top:1778.5px;font-size:43.2px;line-height:43.2px;font-weight:400;color:#28272c;letter-spacing:1.62px;font-family:'Liberation Sans', sans-serif;z-index:5;-webkit-text-stroke:0.81px #28272c;transform:scaleX(0.925);transform-origin:0 0">Add</div>
<div class="t" style="left:241.6px;top:2023.4px;font-size:43.2px;line-height:43.2px;font-weight:400;color:#28272c;letter-spacing:0.98px;font-family:'Liberation Sans', sans-serif;z-index:5;-webkit-text-stroke:0.90px #28272c;transform:scaleX(0.897);transform-origin:0 0">Last 30 days</div>
<div class="t" style="left:573.2px;top:2022.8px;font-size:43.2px;line-height:43.2px;font-weight:400;color:#28272c;letter-spacing:1.00px;font-family:'Liberation Sans', sans-serif;z-index:5;-webkit-text-stroke:0.82px #28272c;transform:scaleX(0.923);transform-origin:0 0">Compare to Past</div>
<div class="t" style="left:3253.9px;top:2023.0px;font-size:43.2px;line-height:43.2px;font-weight:400;color:#28272c;letter-spacing:0.99px;font-family:'Liberation Sans', sans-serif;z-index:5;-webkit-text-stroke:0.76px #28272c;transform:scaleX(0.942);transform-origin:0 0">Linear</div>
<div class="t" style="left:3519.9px;top:2023.0px;font-size:43.2px;line-height:43.2px;font-weight:400;color:#28272c;letter-spacing:1.75px;font-family:'Liberation Sans', sans-serif;z-index:5;-webkit-text-stroke:1.04px #28272c;transform:scaleX(0.847);transform-origin:0 0">Day</div>
<div class="t" style="left:3825.9px;top:2023.0px;font-size:43.2px;line-height:43.2px;font-weight:400;color:#28272c;letter-spacing:1.11px;font-family:'Liberation Sans', sans-serif;z-index:5;-webkit-text-stroke:0.79px #28272c;transform:scaleX(0.933);transform-origin:0 0">Line</div>
<div class="t" style="left:1649.0px;top:2182.3px;font-size:42px;line-height:42px;font-weight:400;color:#5f5e63;letter-spacing:1.11px;font-family:'Liberation Sans', sans-serif;z-index:5;-webkit-text-stroke:0.82px #5f5e63;transform:scaleX(0.924);transform-origin:0 0">Value</div>
<div class="t" style="left:3578.7px;top:2206.6px;font-size:45px;line-height:45px;font-weight:400;color:#8f8f94;letter-spacing:1.13px;font-family:'Liberation Sans', sans-serif;z-index:5;-webkit-text-stroke:0.66px #8f8f94;transform:scaleX(0.980);transform-origin:0 0">Search</div>
<div class="t" style="left:3485.8px;top:2369.7px;font-size:36px;line-height:36px;font-weight:400;color:#5a5a5f;letter-spacing:8.29px;font-family:'Liberation Sans', sans-serif;z-index:5;-webkit-text-stroke:1.40px #5a5a5f">3/3</div>
<div class="t" style="left:3558.3px;top:2468.7px;font-size:43px;line-height:43px;font-weight:400;color:#4f44e0;letter-spacing:0.85px;font-family:'Liberation Sans', sans-serif;z-index:5;-webkit-text-stroke:0.89px #4f44e0;transform:scaleX(0.897);transform-origin:0 0">Select all</div>
<div class="t" style="left:3559.2px;top:2582.0px;font-size:43px;line-height:43px;font-weight:400;color:#5a5a5f;letter-spacing:1.00px;font-family:'Liberation Sans', sans-serif;z-index:5;-webkit-text-stroke:0.94px #5a5a5f;transform:scaleX(0.880);transform-origin:0 0">A. Play Game - Unique</div>
<div class="t" style="left:3556.5px;top:2692.2px;font-size:43px;line-height:43px;font-weight:400;color:#5a5a5f;letter-spacing:0.91px;font-family:'Liberation Sans', sans-serif;z-index:5;-webkit-text-stroke:0.86px #5a5a5f;transform:scaleX(0.909);transform-origin:0 0">B. In-App Purchase -</div>
<div class="t" style="left:3559.2px;top:2750.0px;font-size:43px;line-height:43px;font-weight:400;color:#5a5a5f;letter-spacing:0.97px;font-family:'Liberation Sans', sans-serif;z-index:5;-webkit-text-stroke:0.86px #5a5a5f;transform:scaleX(0.909);transform-origin:0 0">Total</div>
<div class="t" style="left:3557.5px;top:2861.9px;font-size:43px;line-height:43px;font-weight:400;color:#5a5a5f;letter-spacing:1.05px;font-family:'Liberation Sans', sans-serif;z-index:5;-webkit-text-stroke:0.97px #5a5a5f;transform:scaleX(0.872);transform-origin:0 0">C. Power Users</div>
<div class="t" style="left:210.8px;top:3737.7px;font-size:32.6px;line-height:32.6px;font-weight:400;color:#7d869b;letter-spacing:0.00px;font-family:'Liberation Sans', sans-serif;z-index:5;-webkit-text-stroke:1.10px #7d869b">0</div>
<div class="t" style="left:145.3px;top:3585.0px;font-size:32.6px;line-height:32.6px;font-weight:400;color:#7d869b;letter-spacing:0.79px;font-family:'Liberation Sans', sans-serif;z-index:5;-webkit-text-stroke:1.14px #7d869b;transform:scaleX(0.987);transform-origin:0 0">1,000</div>
<div class="t" style="left:141.8px;top:3428.5px;font-size:32.6px;line-height:32.6px;font-weight:400;color:#7d869b;letter-spacing:1.40px;font-family:'Liberation Sans', sans-serif;z-index:5;-webkit-text-stroke:1.10px #7d869b">2,000</div>
<div class="t" style="left:141.8px;top:3275.7px;font-size:32.6px;line-height:32.6px;font-weight:400;color:#7d869b;letter-spacing:1.40px;font-family:'Liberation Sans', sans-serif;z-index:5;-webkit-text-stroke:1.10px #7d869b">3,000</div>
<div class="t" style="left:142.8px;top:3119.6px;font-size:32.6px;line-height:32.6px;font-weight:400;color:#7d869b;letter-spacing:1.15px;font-family:'Liberation Sans', sans-serif;z-index:5;-webkit-text-stroke:1.10px #7d869b">4,000</div>
<div class="t" style="left:141.8px;top:2966.9px;font-size:32.6px;line-height:32.6px;font-weight:400;color:#7d869b;letter-spacing:1.40px;font-family:'Liberation Sans', sans-serif;z-index:5;-webkit-text-stroke:1.10px #7d869b">5,000</div>
<div class="t" style="left:141.8px;top:2810.8px;font-size:32.6px;line-height:32.6px;font-weight:400;color:#7d869b;letter-spacing:1.40px;font-family:'Liberation Sans', sans-serif;z-index:5;-webkit-text-stroke:1.10px #7d869b">6,000</div>
<div class="t" style="left:141.8px;top:2654.4px;font-size:32.6px;line-height:32.6px;font-weight:400;color:#7d869b;letter-spacing:1.40px;font-family:'Liberation Sans', sans-serif;z-index:5;-webkit-text-stroke:1.10px #7d869b">7,000</div>
<div class="t" style="left:141.8px;top:2501.7px;font-size:32.6px;line-height:32.6px;font-weight:400;color:#7d869b;letter-spacing:1.40px;font-family:'Liberation Sans', sans-serif;z-index:5;-webkit-text-stroke:1.10px #7d869b">8,000</div>
<div class="t" style="left:141.8px;top:2346.1px;font-size:32.6px;line-height:32.6px;font-weight:400;color:#7d869b;letter-spacing:1.40px;font-family:'Liberation Sans', sans-serif;z-index:5;-webkit-text-stroke:1.10px #7d869b">9,000</div>
<div class="t" style="left:445.7px;top:3818.7px;font-size:32.5px;line-height:32.5px;font-weight:400;color:#7d869b;letter-spacing:0.80px;font-family:'Liberation Sans', sans-serif;z-index:5;-webkit-text-stroke:0.48px #7d869b;transform:scaleX(0.902);transform-origin:0 0">Mon, Feb 24</div>
<div class="t" style="left:658.7px;top:3780.2px;font-size:32.5px;line-height:32.5px;font-weight:400;color:#7d869b;letter-spacing:0.82px;font-family:'Liberation Sans', sans-serif;z-index:5;-webkit-text-stroke:0.49px #7d869b;transform:scaleX(0.898);transform-origin:0 0">Wed, Feb 26</div>
<div class="t" style="left:883.5px;top:3818.7px;font-size:32.5px;line-height:32.5px;font-weight:400;color:#7d869b;letter-spacing:0.68px;font-family:'Liberation Sans', sans-serif;z-index:5;-webkit-text-stroke:0.47px #7d869b;transform:scaleX(0.904);transform-origin:0 0">Fri, Feb 28</div>
<div class="t" style="left:1099.7px;top:3780.2px;font-size:32.5px;line-height:32.5px;font-weight:400;color:#7d869b;letter-spacing:0.82px;font-family:'Liberation Sans', sans-serif;z-index:5;-webkit-text-stroke:0.61px #7d869b;transform:scaleX(0.855);transform-origin:0 0">Sun, Mar 1</div>
<div class="t" style="left:1311.6px;top:3818.7px;font-size:32.5px;line-height:32.5px;font-weight:400;color:#7d869b;letter-spacing:0.77px;font-family:'Liberation Sans', sans-serif;z-index:5;-webkit-text-stroke:0.52px #7d869b;transform:scaleX(0.889);transform-origin:0 0">Tue, Mar 3</div>
<div class="t" style="left:1522.3px;top:3780.2px;font-size:32.5px;line-height:32.5px;font-weight:400;color:#7d869b;letter-spacing:0.76px;font-family:'Liberation Sans', sans-serif;z-index:5;-webkit-text-stroke:0.46px #7d869b;transform:scaleX(0.908);transform-origin:0 0">Thu, Mar 5</div>
<div class="t" style="left:1740.8px;top:3818.7px;font-size:32.5px;line-height:32.5px;font-weight:400;color:#7d869b;letter-spacing:0.75px;font-family:'Liberation Sans', sans-serif;z-index:5;-webkit-text-stroke:0.57px #7d869b;transform:scaleX(0.871);transform-origin:0 0">Sat, Mar 7</div>
<div class="t" style="left:1941.9px;top:3780.2px;font-size:32.5px;line-height:32.5px;font-weight:400;color:#7d869b;letter-spacing:0.77px;font-family:'Liberation Sans', sans-serif;z-index:5;-webkit-text-stroke:0.41px #7d869b;transform:scaleX(0.927);transform-origin:0 0">Mon, Mar 9</div>
<div class="t" style="left:2153.2px;top:3818.7px;font-size:32.5px;line-height:32.5px;font-weight:400;color:#7d869b;letter-spacing:0.85px;font-family:'Liberation Sans', sans-serif;z-index:5;-webkit-text-stroke:0.62px #7d869b;transform:scaleX(0.854);transform-origin:0 0">Wed, Mar 11</div>
<div class="t" style="left:2374.9px;top:3780.2px;font-size:32.5px;line-height:32.5px;font-weight:400;color:#7d869b;letter-spacing:0.70px;font-family:'Liberation Sans', sans-serif;z-index:5;-webkit-text-stroke:0.55px #7d869b;transform:scaleX(0.877);transform-origin:0 0">Fri, Mar 13</div>
<div class="t" style="left:2580.8px;top:3818.7px;font-size:32.5px;line-height:32.5px;font-weight:400;color:#7d869b;letter-spacing:0.82px;font-family:'Liberation Sans', sans-serif;z-index:5;-webkit-text-stroke:0.61px #7d869b;transform:scaleX(0.857);transform-origin:0 0">Sun, Mar 15</div>
<div class="t" style="left:2796.4px;top:3780.2px;font-size:32.5px;line-height:32.5px;font-weight:400;color:#7d869b;letter-spacing:0.82px;font-family:'Liberation Sans', sans-serif;z-index:5;-webkit-text-stroke:0.65px #7d869b;transform:scaleX(0.844);transform-origin:0 0">Tue, Mar 17</div>
<div class="t" style="left:3006.7px;top:3818.7px;font-size:32.5px;line-height:32.5px;font-weight:400;color:#7d869b;letter-spacing:0.80px;font-family:'Liberation Sans', sans-serif;z-index:5;-webkit-text-stroke:0.58px #7d869b;transform:scaleX(0.866);transform-origin:0 0">Thu, Mar 19</div>
<div class="t" style="left:1825.4px;top:3352.6px;font-size:42.5px;line-height:42.5px;font-weight:400;color:#1f1e23;letter-spacing:1.01px;font-family:'Liberation Sans', sans-serif;z-index:22;-webkit-text-stroke:1.14px #1f1e23;transform:scaleX(0.916);transform-origin:0 0">Power users</div>
<div class="t" style="left:1825.6px;top:3412.2px;font-size:36.5px;line-height:36.5px;font-weight:400;color:#5f5e63;letter-spacing:0.81px;font-family:'Liberation Sans', sans-serif;z-index:22;-webkit-text-stroke:1.04px #5f5e63;transform:scaleX(0.845);transform-origin:0 0">Fri, Mar 13</div>
<div class="t" style="left:1834.6px;top:3485.2px;font-size:43.5px;line-height:43.5px;font-weight:400;color:#28272c;letter-spacing:-0.35px;font-family:'Liberation Mono', monospace;z-index:22">1,045</div>
<div class="t" style="left:1985.3px;top:3483.2px;font-size:42px;line-height:42px;font-weight:400;color:#5f5e63;letter-spacing:1.06px;font-family:'Liberation Sans', sans-serif;z-index:22;-webkit-text-stroke:0.84px #5f5e63;transform:scaleX(0.915);transform-origin:0 0">events</div>
<div class="t" style="left:1836.4px;top:3555.8px;font-size:43.5px;line-height:43.5px;font-weight:400;color:#2b8a57;letter-spacing:-0.64px;font-family:'Liberation Mono', monospace;z-index:22">+73.59%</div>
<div class="t" style="left:2036.8px;top:3553.8px;font-size:42px;line-height:42px;font-weight:400;color:#5f5e63;letter-spacing:0.90px;font-family:'Liberation Sans', sans-serif;z-index:22;-webkit-text-stroke:0.81px #5f5e63;transform:scaleX(0.928);transform-origin:0 0">from previous day</div>
</body></html>
